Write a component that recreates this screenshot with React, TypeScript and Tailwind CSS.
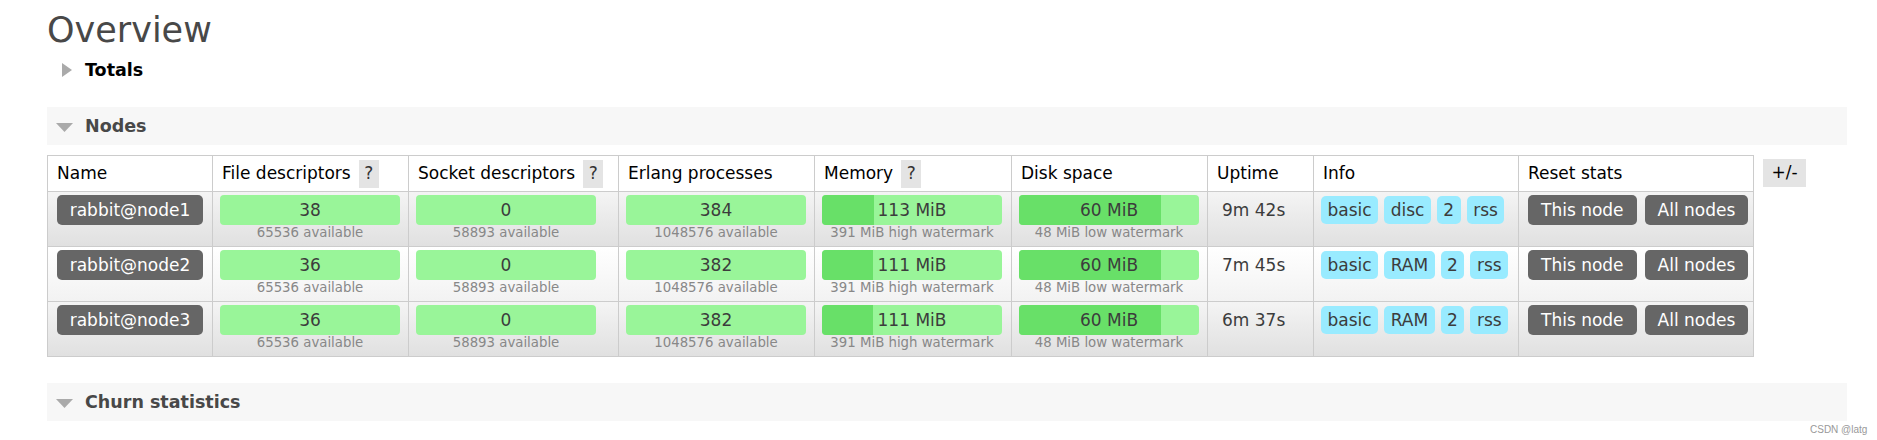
import React from "react";

type Node = {
  name: string;
  fd: string;
  sock: string;
  proc: string;
  mem: string;
  memPct: number;
  disk: string;
  diskPct: number;
  uptime: string;
  info: string[];
};

const nodes: Node[] = [
  { name: "rabbit@node1", fd: "38", sock: "0", proc: "384", mem: "113 MiB", memPct: 29, disk: "60 MiB", diskPct: 79, uptime: "9m 42s", info: ["basic", "disc", "2", "rss"] },
  { name: "rabbit@node2", fd: "36", sock: "0", proc: "382", mem: "111 MiB", memPct: 28.4, disk: "60 MiB", diskPct: 79, uptime: "7m 45s", info: ["basic", "RAM", "2", "rss"] },
  { name: "rabbit@node3", fd: "36", sock: "0", proc: "382", mem: "111 MiB", memPct: 28.4, disk: "60 MiB", diskPct: 79, uptime: "6m 37s", info: ["basic", "RAM", "2", "rss"] },
];

function Help() {
  return (
    <span className="ml-[8px] inline-flex h-[28px] w-[20px] items-center justify-center bg-[#e4e4e4] text-[#333]">?</span>
  );
}

function Bar({ value, sub, fill }: { value: string; sub: string; fill?: number }) {
  return (
    <div className="w-[180px]">
      <div className="relative h-[30px] overflow-hidden rounded-[4px] bg-[#99f599]">
        {fill !== undefined && (
          <div className="absolute inset-y-0 left-0 bg-[#68e068]" style={{ width: `${fill}%` }} />
        )}
        <div className="relative text-center leading-[30px] text-[#3c3c3c]">{value}</div>
      </div>
      <div className="text-center text-[13.3px] leading-[16px] text-[#888]">{sub}</div>
    </div>
  );
}

function SectionBar({ title }: { title: string }) {
  return (
    <div className="flex h-[38px] w-[1800px] items-center bg-[#f7f7f7] pl-[9px]">
      <svg width="17" height="9" viewBox="0 0 17 9" className="mt-[2px]">
        <polygon points="0,0 17,0 8.5,9" fill="#aaa" />
      </svg>
      <span className="ml-[12px] text-[17.5px] font-bold leading-[20px] text-[#484848]">{title}</span>
    </div>
  );
}

const th = "border border-[#ccc] px-[9px] text-left font-normal text-black";
const td = "border border-[#ccc] align-top pt-[3px]";

export default function App() {
  return (
    <div
      className="relative h-[440px] w-[1877px] overflow-hidden bg-white text-[17px]"
      style={{ fontFamily: '"DejaVu Sans", Verdana, sans-serif' }}
    >
      <div className="pl-[47px]">
        <h1 className="mt-[10px] text-[35px] leading-[40px] font-normal text-[#484848]">Overview</h1>

        <div className="mt-[10px] flex h-[20px] items-center">
          <svg width="10" height="14" viewBox="0 0 10 14" className="ml-[15px]">
            <polygon points="0,0 10,7 0,14" fill="#aaa" />
          </svg>
          <span className="ml-[13px] text-[17.5px] font-bold leading-[20px] text-black">Totals</span>
        </div>

        <div className="mt-[27px]">
          <SectionBar title="Nodes" />
        </div>

        <div className="mt-[10px] flex items-start">
          <table className="w-[1706px] table-fixed border-collapse">
            <colgroup>
              <col className="w-[165px]" />
              <col className="w-[196px]" />
              <col className="w-[210px]" />
              <col className="w-[196px]" />
              <col className="w-[197px]" />
              <col className="w-[196px]" />
              <col className="w-[106px]" />
              <col className="w-[205px]" />
              <col className="w-[235px]" />
            </colgroup>
            <thead>
              <tr className="h-[36px] bg-white">
                <th className={th}>Name</th>
                <th className={th}>
                  <span className="flex items-center">File descriptors<Help /></span>
                </th>
                <th className={th}>
                  <span className="flex items-center">Socket descriptors<Help /></span>
                </th>
                <th className={th}>Erlang processes</th>
                <th className={th}>
                  <span className="flex items-center">Memory<Help /></span>
                </th>
                <th className={th}>Disk space</th>
                <th className={th}>Uptime</th>
                <th className={th}>Info</th>
                <th className={th}>Reset stats</th>
              </tr>
            </thead>
            <tbody>
              {nodes.map((n, i) => (
                <tr
                  key={n.name}
                  className={
                    "h-[55px] bg-gradient-to-b " +
                    (i % 2 === 0 ? "from-[#f4f4f4] to-[#e0e0e0]" : "from-[#ffffff] to-[#f2f2f2]")
                  }
                >
                  <td className={td + " text-center"}>
                    <span className="inline-block h-[30px] rounded-[5px] bg-[#666] px-[13px] leading-[30px] text-white">
                      {n.name}
                    </span>
                  </td>
                  <td className={td + " pl-[7px]"}>
                    <Bar value={n.fd} sub="65536 available" />
                  </td>
                  <td className={td + " pl-[7px]"}>
                    <Bar value={n.sock} sub="58893 available" />
                  </td>
                  <td className={td + " pl-[7px]"}>
                    <Bar value={n.proc} sub="1048576 available" />
                  </td>
                  <td className={td + " pl-[7px]"}>
                    <Bar value={n.mem} sub="391 MiB high watermark" fill={n.memPct} />
                  </td>
                  <td className={td + " pl-[7px]"}>
                    <Bar value={n.disk} sub="48 MiB low watermark" fill={n.diskPct} />
                  </td>
                  <td className={td + " pl-[14px] leading-[30px] text-[#3c3c3c]"}>{n.uptime}</td>
                  <td className={td + " pl-[7px]"}>
                    <div className="flex gap-[6px] pt-[1px]">
                      {n.info.map((b) => (
                        <span key={b} className="h-[28px] rounded-[5px] bg-[#99ebff] px-[6.5px] leading-[28px] text-[#3c3c3c]">
                          {b}
                        </span>
                      ))}
                    </div>
                  </td>
                  <td className={td + " pl-[9px]"}>
                    <div className="flex gap-[8px]">
                      <span className="h-[30px] rounded-[5px] bg-[#666] px-[13px] leading-[30px] text-white">This node</span>
                      <span className="h-[30px] rounded-[5px] bg-[#666] px-[13px] leading-[30px] text-white">All nodes</span>
                    </div>
                  </td>
                </tr>
              ))}
            </tbody>
          </table>
          <span className="ml-[9px] mt-[4px] flex h-[28px] w-[43px] items-center justify-center bg-[#e4e4e4] text-black">
            +/-
          </span>
        </div>

        <div className="mt-[26px]">
          <SectionBar title="Churn statistics" />
        </div>
      </div>

      <span
        className="absolute left-[1810px] top-[424px] text-[10px] leading-[12px] text-[#999]"
        style={{ fontFamily: '"Liberation Sans", Arial, sans-serif' }}
      >
        CSDN @latg
      </span>
    </div>
  );
}
